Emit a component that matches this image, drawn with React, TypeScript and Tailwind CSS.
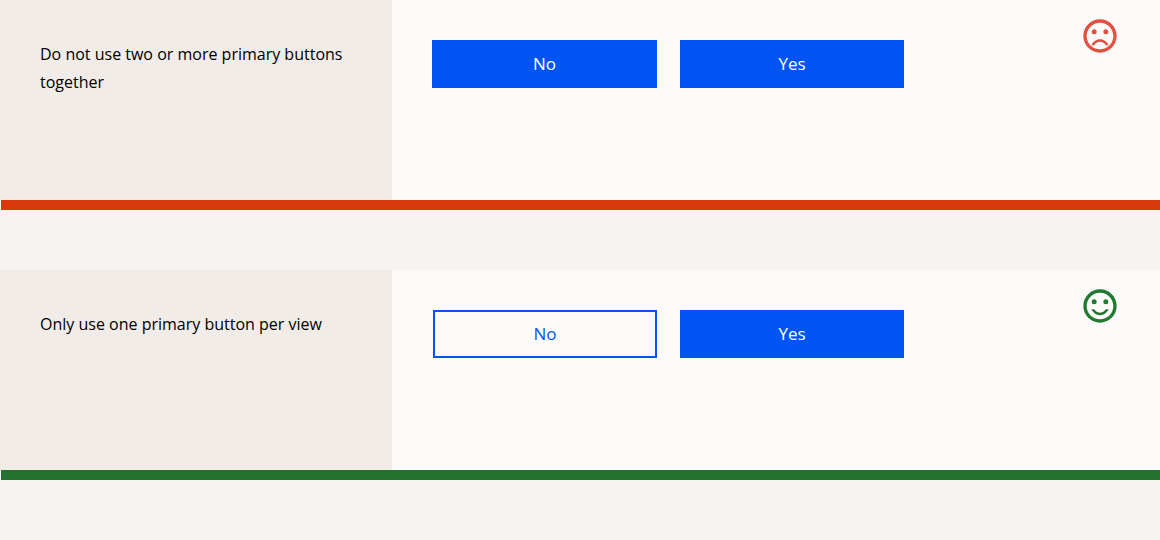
import React from "react";

type RuleProps = {
  text: string;
  good?: boolean;
  noClass: string;
};

const buttonBase = "h-12 text-[17px] leading-6";

function Face({ good }: { good?: boolean }) {
  return (
    <svg
      className={good ? "size-10 text-[#217a31]" : "size-10 text-[#e35041]"}
      viewBox="0 0 24 24"
      fill="currentColor"
      aria-hidden="true"
    >
      <path d="M11.99 2C6.47 2 2 6.48 2 12s4.47 10 9.99 10C17.52 22 22 17.52 22 12S17.52 2 11.99 2zM12 20c-4.42 0-8-3.58-8-8s3.58-8 8-8 8 3.58 8 8-3.58 8-8 8z" />
      <circle cx="8.5" cy="9.5" r="1.5" />
      <circle cx="15.5" cy="9.5" r="1.5" />
      {good ? (
        <path d="M12 16c-1.48 0-2.75-.81-3.45-2H6.88c.8 2.05 2.79 3.5 5.12 3.5s4.32-1.45 5.12-3.5h-1.67c-.7 1.19-1.97 2-3.45 2z" />
      ) : (
        <path d="M12 14c-2.33 0-4.32 1.45-5.12 3.5h1.67c.69-1.19 1.97-2 3.45-2s2.75.81 3.45 2h1.67c-.8-2.05-2.79-3.5-5.12-3.5z" />
      )}
    </svg>
  );
}

function Rule({ text, good, noClass }: RuleProps) {
  return (
    <section className="mb-[60px]">
      <div className="flex min-h-[200px]">
        <div className="w-[392px] shrink-0 bg-[#f1ece8] p-10">
          <p className="text-base leading-7 text-black">{text}</p>
        </div>
        <div className="flex grow items-start justify-between bg-[#fbfaf9] px-10">
          <div className="flex w-[472px] justify-end gap-[23px] pt-10">
            <button type="button" className={`${buttonBase} ${noClass}`}>
              No
            </button>
            <button type="button" className={`${buttonBase} w-[224px] bg-[#0055f2] text-white`}>
              Yes
            </button>
          </div>
          <div className="pt-4">
            <Face good={good} />
          </div>
        </div>
      </div>
      <div className={good ? "ml-px h-2.5 bg-[#247230]" : "ml-px h-2.5 bg-[#d93a0d]"} />
    </section>
  );
}

export default function App() {
  return (
    <main className="flow-root min-h-screen bg-[#f7f3f0] font-['Open_Sans','Noto_Sans',sans-serif]">
      <Rule
        text="Do not use two or more primary buttons together"
        noClass="w-[225px] bg-[#0055f2] text-white"
      />
      <Rule
        text="Only use one primary button per view"
        noClass="w-[224px] border-2 border-[#0055f2] text-[#0055f2]"
        good
      />
    </main>
  );
}
